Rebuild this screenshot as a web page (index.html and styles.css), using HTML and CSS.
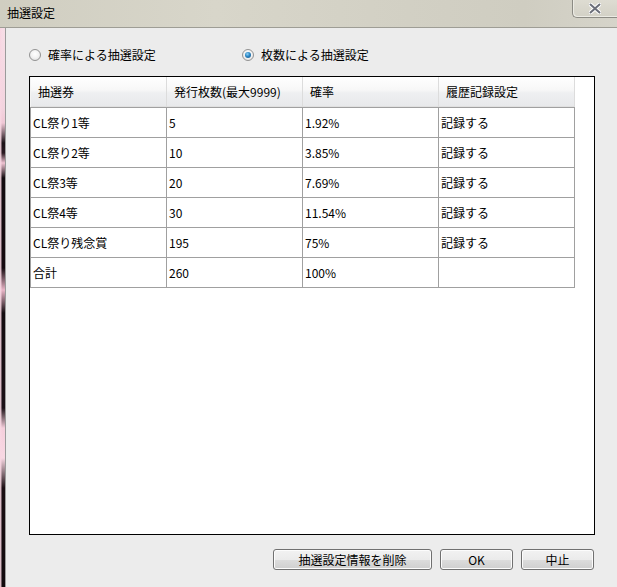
FILE: index.html
```html
<html>
  <head>
    <meta charset="utf-8" />
    <link rel="stylesheet" href="styles.css">
  </head>
  <body>
    <div class="window">
      <div class="titlebar">
        <span class="titlebar__text">抽選設定</span>
        <button class="titlebar__close" type="button">
          <svg width="12" height="11" viewBox="0 0 12 11"><path d="M1.5 1.5 L10.5 9.5 M10.5 1.5 L1.5 9.5" stroke="#fff" stroke-width="4" stroke-linecap="round"/><path d="M1.5 1.5 L10.5 9.5 M10.5 1.5 L1.5 9.5" stroke="#6b6e78" stroke-width="2" stroke-linecap="round"/></svg>
        </button>
      </div>
      <div class="frame">
        <div class="frame__edge"></div>
        <div class="client">
          <div class="modes">
            <label class="mode mode--first"><span class="radio"></span>確率による抽選設定</label>
            <label class="mode"><span class="radio radio--on"></span>枚数による抽選設定</label>
          </div>
          <div class="gridBox">
            <div class="grid__row grid__row--head">
              <div class="grid__head">抽選券</div>
              <div class="grid__head">発行枚数(最大9999)</div>
              <div class="grid__head">確率</div>
              <div class="grid__head">履歴記録設定</div>
            </div>
            <div class="grid__row grid__row--first">
              <div class="grid__cell">CL祭り1等</div>
              <div class="grid__cell">5</div>
              <div class="grid__cell">1.92%</div>
              <div class="grid__cell">記録する</div>
            </div>
            <div class="grid__row">
              <div class="grid__cell">CL祭り2等</div>
              <div class="grid__cell">10</div>
              <div class="grid__cell">3.85%</div>
              <div class="grid__cell">記録する</div>
            </div>
            <div class="grid__row">
              <div class="grid__cell">CL祭3等</div>
              <div class="grid__cell">20</div>
              <div class="grid__cell">7.69%</div>
              <div class="grid__cell">記録する</div>
            </div>
            <div class="grid__row">
              <div class="grid__cell">CL祭4等</div>
              <div class="grid__cell">30</div>
              <div class="grid__cell">11.54%</div>
              <div class="grid__cell">記録する</div>
            </div>
            <div class="grid__row">
              <div class="grid__cell">CL祭り残念賞</div>
              <div class="grid__cell">195</div>
              <div class="grid__cell">75%</div>
              <div class="grid__cell">記録する</div>
            </div>
            <div class="grid__row">
              <div class="grid__cell">合計</div>
              <div class="grid__cell">260</div>
              <div class="grid__cell">100%</div>
              <div class="grid__cell"></div>
            </div>
          </div>
          <div class="actions">
            <button class="button button--wide" type="button">抽選設定情報を削除</button>
            <button class="button" type="button">OK</button>
            <button class="button" type="button">中止</button>
          </div>
        </div>
      </div>
    </div>
  </body>
</html>
```

FILE: styles.css
```css
body {
  margin: 0;
  width: 617px;
  height: 587px;
  overflow: hidden;
  font-family: "Noto Sans CJK JP", "Liberation Sans", sans-serif;
  font-size: 12px;
  color: #000;
}

.window {
  display: flex;
  flex-direction: column;
  height: 587px;
}

.titlebar {
  height: 27px;
  border-bottom: 1px solid #9e9d95;
  display: flex;
  justify-content: space-between;
  align-items: flex-start;
  background: linear-gradient(to right, #d0cec1 0%, #d8d6ca 35%, #d3d1c5 60%, #cfcdc1 85%, #d6d4ca 100%);
}

.titlebar__text {
  padding: 5px 0 0 7px;
  line-height: 16px;
}

.titlebar__close {
  width: 45px;
  height: 18px;
  margin: 0;
  padding: 0;
  border: 1px solid #8c8b84;
  border-top: none;
  border-right: none;
  border-bottom-left-radius: 5px;
  box-shadow: inset 1px -1px 0 #ecebe4;
  background: linear-gradient(#dedcd2, #d3d1c6);
  display: flex;
  align-items: center;
  justify-content: center;
}

.frame {
  flex: 1;
  display: flex;
}

/* blurred desktop showing at the left of the window */
.frame__edge {
  width: 5px;
  border-right: 1px solid #9b9b9b;
  background:
    linear-gradient(to right, rgba(248, 214, 226, .95) 0, rgba(248, 214, 226, .8) 1px, transparent 2px),
    linear-gradient(#f7dde6 0, #f3d4df 80px, #f0c8d6 95px, #1a1015 115px, #2a1820 125px, #f0c4d3 135px, #120a0e 150px, #15090f 240px, #eab6c8 262px, #130b0f 285px, #1b1016 380px, #f5cfdc 400px, #f8d8e3 430px, #1a0d12 460px, #110a0d 560px);
}

.client {
  flex: 1;
  background-color: #ececec;
  padding: 20px 22px 0 23px;
  display: flex;
  flex-direction: column;
}

.modes {
  display: flex;
  height: 14px;
  align-items: center;
}

.mode {
  display: flex;
  align-items: center;
  gap: 7px;
  line-height: 14px;
}

.mode--first {
  width: 213px;
}

.radio {
  box-sizing: border-box;
  width: 12px;
  height: 12px;
  border-radius: 50%;
  border: 1px solid #929292;
  background: radial-gradient(circle at 50% 40%, #ffffff 0, #f2f2f2 50%, #d8d8d8 100%);
  display: flex;
  align-items: center;
  justify-content: center;
}

.radio--on::after {
  content: "";
  width: 6px;
  height: 6px;
  border-radius: 50%;
  background: radial-gradient(circle at 40% 35%, #8fd0f5 0, #2a86c4 45%, #1d4f7f 100%);
}

.gridBox {
  box-sizing: border-box;
  height: 459px;
  margin-top: 14px;
  border: 1px solid #000;
  background-color: #fff;
}

.grid__row {
  display: flex;
  width: 545px;
  box-sizing: border-box;
  border-left: 1px solid #a0a0a0;
}

.grid__row--head {
  border-left-color: #f3f3f3;
  height: 30px;
}

.grid__row--first .grid__cell {
  border-top: 1px solid #a0a0a0;
}

.grid__head {
  box-sizing: border-box;
  width: 136px;
  padding-left: 7px;
  line-height: 29px;
  border-right: 1px solid #dcdcdc;
  border-bottom: 1px solid #e0e0e0;
  background: linear-gradient(#ffffff 0, #f7f7f7 45%, #eeeff1 55%, #e8e9eb 100%);
}

.grid__cell {
  box-sizing: content-box;
  width: 133px;
  height: 29px;
  padding-left: 2px;
  line-height: 29px;
  border-right: 1px solid #a0a0a0;
  border-bottom: 1px solid #a0a0a0;
  white-space: nowrap;
}

.actions {
  display: flex;
  justify-content: flex-end;
  gap: 8px;
  margin-top: 14px;
  padding-right: 1px;
}

.button {
  box-sizing: border-box;
  width: 73px;
  height: 21px;
  margin: 0;
  padding: 0;
  font-family: "Noto Sans CJK JP", "Liberation Sans", sans-serif;
  font-size: 12px;
  color: #000;
  border: 1px solid #707070;
  border-radius: 3px;
  box-shadow: inset 0 0 0 1px #fcfcfc;
  background: linear-gradient(#f2f2f2 0, #ebebeb 50%, #dddddd 51%, #cfcfcf 100%);
}

.button--wide {
  width: 159px;
}
```
